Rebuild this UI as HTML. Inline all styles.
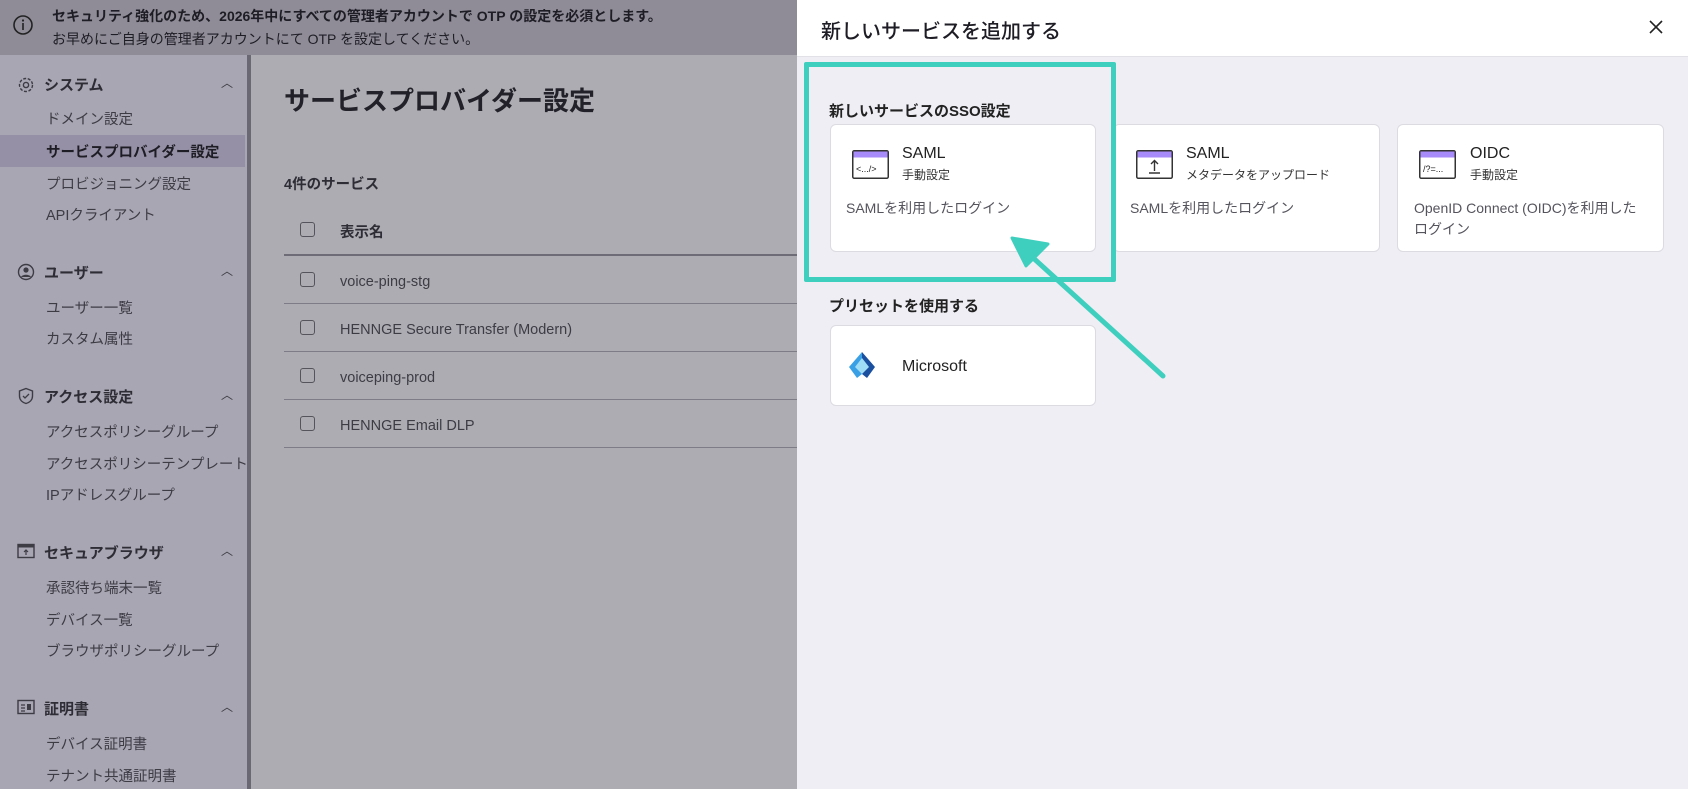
<!DOCTYPE html>
<html><head><meta charset="utf-8"><style>
*{margin:0;padding:0;box-sizing:border-box}
body{width:1688px;height:789px;overflow:hidden;position:relative;font-family:"Liberation Sans","Noto Sans CJK JP",sans-serif;background:#adacb3;color:#2a2830}
.a{position:absolute;white-space:nowrap}
#banner{left:0;top:0;width:797px;height:55px;background:#8f8c98}
#side{left:0;top:55px;width:247px;height:734px;background:#a8a6b2}
#sb{left:247px;top:55px;width:4px;height:734px;background:#6a6873}
.sec{font-size:15px;font-weight:bold;color:#2e2c35;left:44px}
.it{font-size:14.5px;color:#3d3b44;left:46px}
.chev{left:221px;font-size:12px;color:#3d3b44}
.hl{left:0;top:135px;width:245px;height:32px;background:#9690a6}
.line{height:1px;background:#7e7c86;left:284px;width:513px}
.cb{width:15px;height:15px;border:1.5px solid #55535c;border-radius:3px;left:300px;background:transparent}
.row{font-size:14.5px;color:#3d3b44;left:340px}
#panel{left:797px;top:0;width:891px;height:789px;background:#efeef4}
#phead{left:797px;top:0;width:891px;height:57px;background:#fff;border-bottom:1px solid #e2e1e8}
.card{background:#fff;border:1px solid #dcdbe2;border-radius:6px}
.ct{font-size:16px;color:#222;font-weight:500}
.cs{font-size:12px;color:#333}
.cd{font-size:14px;color:#55535c}
</style></head><body>
<div class="a" id="banner"></div>
<svg class="a" style="left:12px;top:14px" width="22" height="22" viewBox="0 0 22 22"><circle cx="11" cy="11" r="9" fill="none" stroke="#222" stroke-width="1.6"/><rect x="10.2" y="9" width="1.6" height="7" fill="#222"/><circle cx="11" cy="6.5" r="1.1" fill="#222"/></svg>
<div class="a" style="left:52px;top:6px;font-size:14px;font-weight:bold;color:#1e1c24">セキュリティ強化のため、2026年中にすべての管理者アカウントで OTP の設定を必須とします。</div>
<div class="a" style="left:52px;top:29px;font-size:14px;color:#1e1c24">お早めにご自身の管理者アカウントにて OTP を設定してください。</div>

<div class="a" id="side"></div>
<div class="a" id="sb"></div>
<div class="a hl"></div>
<svg class="a" style="left:17px;top:76px" width="18" height="18" viewBox="0 0 18 18"><circle cx="9" cy="9" r="2.6" fill="none" stroke="#3d3b44" stroke-width="1.4"/><circle cx="9" cy="9" r="6.5" fill="none" stroke="#3d3b44" stroke-width="1.4" stroke-dasharray="3 1.6"/></svg>
<div class="a sec" style="top:74px">システム</div><div class="a chev" style="top:74px">︿</div>
<div class="a it" style="top:108px">ドメイン設定</div>
<div class="a it" style="top:141px;font-weight:bold;color:#1e1c24">サービスプロバイダー設定</div>
<div class="a it" style="top:173px">プロビジョニング設定</div>
<div class="a it" style="top:204px">APIクライアント</div>
<svg class="a" style="left:17px;top:263px" width="18" height="18" viewBox="0 0 18 18"><circle cx="9" cy="9" r="7.5" fill="none" stroke="#3d3b44" stroke-width="1.4"/><circle cx="9" cy="7" r="2.6" fill="#3d3b44"/><path d="M4 14c1.5-3 8.5-3 10 0" fill="#3d3b44"/></svg>
<div class="a sec" style="top:262px">ユーザー</div><div class="a chev" style="top:262px">︿</div>
<div class="a it" style="top:297px">ユーザー一覧</div>
<div class="a it" style="top:328px">カスタム属性</div>
<svg class="a" style="left:17px;top:387px" width="18" height="18" viewBox="0 0 18 18"><path d="M9 1.5L15.5 4v5c0 4-3 6.5-6.5 7.5C5.5 15.5 2.5 13 2.5 9V4z" fill="none" stroke="#3d3b44" stroke-width="1.4"/><path d="M6 9l2 2 4-4" fill="none" stroke="#3d3b44" stroke-width="1.3"/></svg>
<div class="a sec" style="top:386px">アクセス設定</div><div class="a chev" style="top:386px">︿</div>
<div class="a it" style="top:421px">アクセスポリシーグループ</div>
<div class="a it" style="top:453px">アクセスポリシーテンプレート</div>
<div class="a it" style="top:484px">IPアドレスグループ</div>
<svg class="a" style="left:17px;top:543px" width="18" height="16" viewBox="0 0 18 16"><rect x="1" y="1.5" width="16" height="13" fill="none" stroke="#3d3b44" stroke-width="1.4"/><rect x="1" y="1.5" width="16" height="3" fill="#3d3b44"/><path d="M9 7v5M7 9l2-2 2 2" stroke="#3d3b44" fill="none" stroke-width="1.2"/></svg>
<div class="a sec" style="top:542px">セキュアブラウザ</div><div class="a chev" style="top:542px">︿</div>
<div class="a it" style="top:577px">承認待ち端末一覧</div>
<div class="a it" style="top:609px">デバイス一覧</div>
<div class="a it" style="top:640px">ブラウザポリシーグループ</div>
<svg class="a" style="left:17px;top:699px" width="18" height="16" viewBox="0 0 18 16"><rect x="1" y="1.5" width="16" height="13" fill="none" stroke="#3d3b44" stroke-width="1.4"/><path d="M4 6h4M4 9h4M4 12h4" stroke="#3d3b44" stroke-width="1.2"/><rect x="10" y="5" width="4" height="6" fill="#3d3b44"/></svg>
<div class="a sec" style="top:698px">証明書</div><div class="a chev" style="top:698px">︿</div>
<div class="a it" style="top:733px">デバイス証明書</div>
<div class="a it" style="top:765px">テナント共通証明書</div>

<div class="a" style="left:284px;top:81px;font-size:26px;font-weight:bold;color:#222028">サービスプロバイダー設定</div>
<div class="a" style="left:284px;top:173px;font-size:14.5px;font-weight:bold;color:#2e2c35">4件のサービス</div>
<div class="a cb" style="top:222px"></div>
<div class="a" style="left:340px;top:221px;font-size:14.5px;font-weight:bold;color:#2e2c35">表示名</div>
<div class="a line" style="top:254px;height:2px;background:#6e6c76"></div>
<div class="a cb" style="top:272px"></div><div class="a row" style="top:274px">voice-ping-stg</div>
<div class="a line" style="top:303px"></div>
<div class="a cb" style="top:320px"></div><div class="a row" style="top:322px">HENNGE Secure Transfer (Modern)</div>
<div class="a line" style="top:351px"></div>
<div class="a cb" style="top:368px"></div><div class="a row" style="top:370px">voiceping-prod</div>
<div class="a line" style="top:399px"></div>
<div class="a cb" style="top:416px"></div><div class="a row" style="top:418px">HENNGE Email DLP</div>
<div class="a line" style="top:447px"></div>

<div class="a" id="panel"></div>
<div class="a" id="phead"></div>
<div class="a" style="left:821px;top:15px;font-size:20px;font-weight:500;color:#1e1c24">新しいサービスを追加する</div>
<svg class="a" style="left:1649px;top:20px" width="14" height="14" viewBox="0 0 14 14"><path d="M1 1l12 12M13 1L1 13" stroke="#222" stroke-width="1.6"/></svg>

<div class="a" style="left:829px;top:100px;font-size:15px;font-weight:bold;color:#222">新しいサービスのSSO設定</div>
<div class="a card" style="left:830px;top:124px;width:266px;height:128px"></div>
<div class="a card" style="left:1113px;top:124px;width:267px;height:128px"></div>
<div class="a card" style="left:1397px;top:124px;width:267px;height:128px"></div>
<svg class="a" style="left:852px;top:150px" width="37" height="29" viewBox="0 0 37 29"><rect x="0.75" y="0.75" width="35.5" height="27.5" rx="1.5" fill="#fff" stroke="#333" stroke-width="1.5"/><rect x="1.5" y="1.5" width="34" height="6" fill="#a78bfa"/><text x="4" y="22" font-size="9" font-family="Liberation Sans" fill="#222">&lt;...&#47;&gt;</text></svg>
<svg class="a" style="left:1136px;top:150px" width="37" height="29" viewBox="0 0 37 29"><rect x="0.75" y="0.75" width="35.5" height="27.5" rx="1.5" fill="#fff" stroke="#333" stroke-width="1.5"/><rect x="1.5" y="1.5" width="34" height="6" fill="#a78bfa"/><path d="M18.5 11v10M15 14l3.5-3.5L22 14M13 23h11" stroke="#333" stroke-width="1.4" fill="none"/></svg>
<svg class="a" style="left:1419px;top:150px" width="37" height="29" viewBox="0 0 37 29"><rect x="0.75" y="0.75" width="35.5" height="27.5" rx="1.5" fill="#fff" stroke="#333" stroke-width="1.5"/><rect x="1.5" y="1.5" width="34" height="6" fill="#a78bfa"/><text x="4" y="22" font-size="9" font-family="Liberation Sans" fill="#222">/?=...</text></svg>
<div class="a ct" style="left:902px;top:145px">SAML</div><div class="a cs" style="left:902px;top:166px">手動設定</div>
<div class="a cd" style="left:846px;top:198px">SAMLを利用したログイン</div>
<div class="a ct" style="left:1186px;top:145px">SAML</div><div class="a cs" style="left:1186px;top:166px">メタデータをアップロード</div>
<div class="a cd" style="left:1130px;top:198px">SAMLを利用したログイン</div>
<div class="a ct" style="left:1470px;top:145px">OIDC</div><div class="a cs" style="left:1470px;top:166px">手動設定</div>
<div class="a cd" style="left:1414px;top:198px">OpenID Connect (OIDC)を利用した</div>
<div class="a cd" style="left:1414px;top:219px">ログイン</div>

<div class="a" style="left:829px;top:295px;font-size:15px;font-weight:bold;color:#222">プリセットを使用する</div>
<div class="a card" style="left:830px;top:325px;width:266px;height:81px"></div>
<svg class="a" style="left:846px;top:350px" width="32" height="32" viewBox="0 0 32 32"><path d="M16 2L3 17l8 11 5-4z" fill="#3aa0e6"/><path d="M16 2l13 15-8 11-5-4z" fill="#1b4fa0"/><path d="M16 8l-7 9 7 7 7-7z" fill="#9fdcf5"/></svg>
<div class="a" style="left:902px;top:358px;font-size:16px;font-weight:500;color:#222">Microsoft</div>

<div class="a" style="left:804px;top:62px;width:312px;height:220px;border:5px solid #3ecfbe;border-radius:2px"></div>
<svg class="a" style="left:0;top:0" width="1688" height="789"><line x1="1163" y1="376" x2="1030" y2="255" stroke="#3ecfbe" stroke-width="5" stroke-linecap="round"/><path d="M1012 238l36 6-22 22z" fill="#3ecfbe" stroke="#3ecfbe" stroke-width="3" stroke-linejoin="round"/></svg>
</body></html>
